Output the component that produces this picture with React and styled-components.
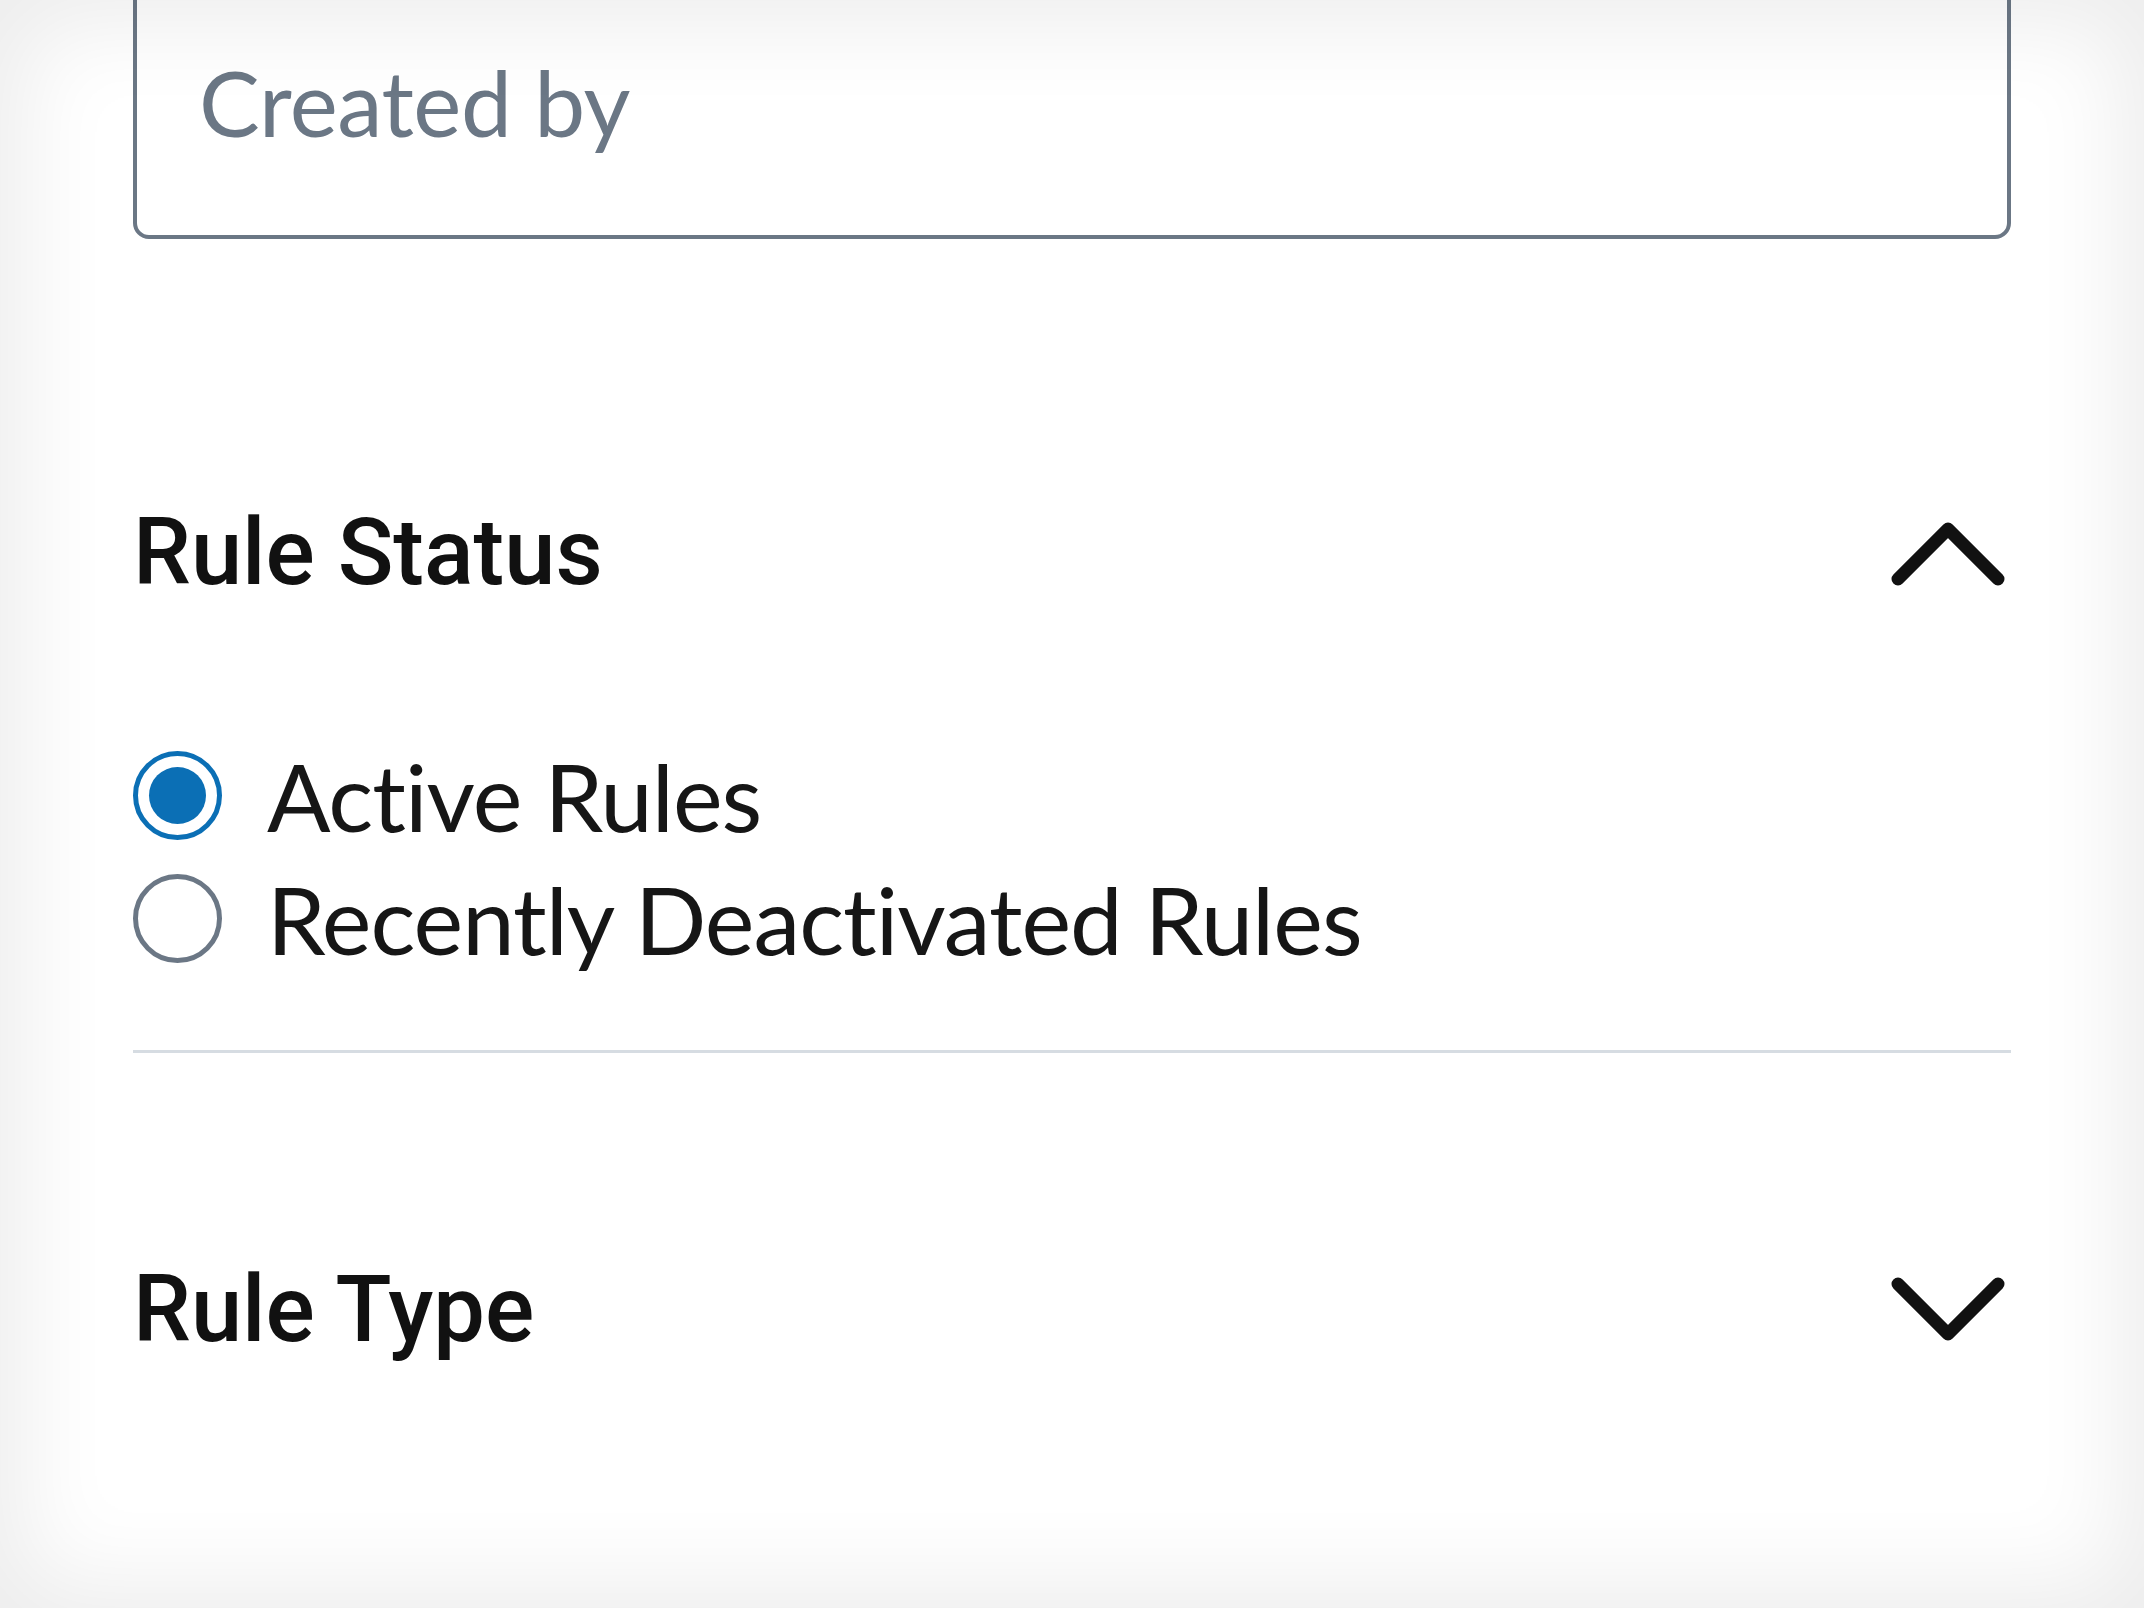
import React, { useState } from "react";
import styled, { createGlobalStyle } from "styled-components";

const GlobalStyle = createGlobalStyle`
  html, body {
    margin: 0;
    padding: 0;
    background: #ffffff;
    overflow: hidden;
  }
  body {
    font-family: Lato, "Noto Sans", Arial, sans-serif;
    font-variant-ligatures: none;
    color: #141414;
  }
`;

const Page = styled.div`
  position: relative;
  height: 1608px;
  padding: 0 133px;
  display: flex;
  flex-direction: column;
  overflow: hidden;

  &::after {
    content: "";
    position: absolute;
    inset: 0;
    pointer-events: none;
    box-shadow: inset 0 0 90px 24px rgba(0, 0, 0, 0.075);
  }
`;

const SearchField = styled.div`
  margin-top: -41px;
  height: 280px;
  box-sizing: border-box;
  border: 4px solid #6b7785;
  border-radius: 16px;
  padding: 93px 0 0 62px;
  display: flex;
  align-items: flex-start;
`;

const Placeholder = styled.span`
  font-size: 91px;
  line-height: 1;
  letter-spacing: -0.5px;
  color: #6b7785;
`;

const SectionHeader = styled.button`
  all: unset;
  height: 140px;
  margin-top: ${(p) => p.$gap}px;
  display: flex;
  align-items: center;
  justify-content: space-between;
  cursor: pointer;
`;

const SectionTitle = styled.span`
  font-family: Roboto, Lato, Arial, sans-serif;
  font-size: 92px;
  font-weight: 500;
  line-height: 1;
  color: #111111;
`;

const Chevron = styled.svg`
  width: 114px;
  height: 66px;
  margin-right: 6px;
  flex-shrink: 0;
`;

const RadioList = styled.div`
  margin-top: 111px;
  display: flex;
  flex-direction: column;
`;

const RadioRow = styled.label`
  height: 123px;
  display: flex;
  align-items: center;
  gap: 45px;
  cursor: pointer;
`;

const RadioCircle = styled.span`
  width: 89px;
  height: 89px;
  box-sizing: border-box;
  border-radius: 50%;
  border: 5px solid ${(p) => (p.$checked ? "#0b6fb5" : "#6b7785")};
  display: flex;
  align-items: center;
  justify-content: center;
  flex-shrink: 0;

  &::before {
    content: "";
    width: 57px;
    height: 57px;
    border-radius: 50%;
    background: #0b6fb5;
    display: ${(p) => (p.$checked ? "block" : "none")};
  }
`;

const RadioLabel = styled.span`
  font-size: 94px;
  line-height: 1;
  letter-spacing: -1px;
  color: #161616;
`;

const Divider = styled.hr`
  margin: 70px 0 0;
  border: none;
  height: 3px;
  background: #d6dce2;
`;

const ChevronIcon = ({ up }) => (
  <Chevron viewBox="0 0 114 66" fill="none">
    <path
      d={up ? "M7 59 L57 9 L107 59" : "M7 7 L57 57 L107 7"}
      stroke="#111111"
      strokeWidth="13"
      strokeLinecap="round"
      strokeLinejoin="round"
    />
  </Chevron>
);

const options = ["Active Rules", "Recently Deactivated Rules"];

export default function App() {
  const [selected, setSelected] = useState(0);

  return (
    <>
      <GlobalStyle />
      <Page>
        <SearchField>
          <Placeholder>Created by</Placeholder>
        </SearchField>

        <SectionHeader $gap={244}>
          <SectionTitle>Rule Status</SectionTitle>
          <ChevronIcon up />
        </SectionHeader>

        <RadioList>
          {options.map((label, i) => (
            <RadioRow key={label} onClick={() => setSelected(i)}>
              <RadioCircle $checked={selected === i} />
              <RadioLabel>{label}</RadioLabel>
            </RadioRow>
          ))}
        </RadioList>

        <Divider />

        <SectionHeader $gap={187}>
          <SectionTitle>Rule Type</SectionTitle>
          <ChevronIcon />
        </SectionHeader>
      </Page>
    </>
  );
}
